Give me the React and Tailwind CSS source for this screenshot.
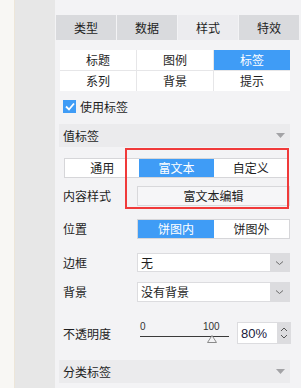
import React from "react";

const tabs = ["类型", "数据", "样式", "特效"];
const subTabs = ["标题", "图例", "标签", "系列", "背景", "提示"];

function Chevron() {
  return (
    <svg width="9" height="6" viewBox="0 0 9 6">
      <path d="M1 1.5 L4.5 4.5 L8 1.5" fill="none" stroke="#6b6b6b" strokeWidth="1" />
    </svg>
  );
}

function SectionHeader({ title }) {
  return (
    <div className="ml-[4px] w-[231px] h-[23px] bg-[#ebebed] flex items-center justify-between pl-[4px] pr-[5px]">
      <span>{title}</span>
      <svg width="9" height="5" viewBox="0 0 9 5">
        <path d="M0 0 L9 0 L4.5 5 Z" fill="#a3a3a6" />
      </svg>
    </div>
  );
}

function Select({ value }) {
  return (
    <div className="w-[153px] h-full flex border border-[#dcdcdf] bg-white">
      <div className="flex-1 flex items-center pl-[3px]">{value}</div>
      <div className="w-[19px] bg-[#dcdcdf] flex items-center justify-center">
        <Chevron />
      </div>
    </div>
  );
}

export default function App() {
  return (
    <div className="flex w-[301px] h-[388px] overflow-hidden text-[12px] text-[#1e1e1e] font-['Noto_Sans_CJK_SC',sans-serif] leading-none">
      {/* left strips */}
      <div className="w-[15px] bg-[#f8f7f4] border-r border-[#ede6d9]" />
      <div className="w-[40px] bg-[#e7e7e7]" />

      {/* settings panel */}
      <div className="relative flex-1 bg-[#f3f3f5] flex flex-col">
        {/* main tabs */}
        <div className="mt-[15px] ml-[1px] flex gap-[1px] h-[25px]">
          {tabs.map((t) => (
            <div
              key={t}
              className={
                "w-[60px] flex items-center justify-center " +
                (t === "样式" ? "bg-[#ececef]" : "bg-[#d9dadd]")
              }
            >
              {t}
            </div>
          ))}
        </div>

        {/* sub tabs */}
        <div className="mt-[10px] ml-[5px] w-[230px] grid grid-cols-3 gap-[1px] bg-[#e6e6e8]">
          {subTabs.map((t) => (
            <div
              key={t}
              className={
                "h-[20px] flex items-center justify-center " +
                (t === "标签" ? "bg-[#3f9cf6] text-white" : "bg-white")
              }
            >
              {t}
            </div>
          ))}
        </div>

        {/* use label checkbox */}
        <div className="mt-[9px] ml-[8px] h-[13px] flex items-center gap-[4px]">
          <div className="w-[13px] h-[13px] bg-[#3f9cf6] flex items-center justify-center">
            <svg width="10" height="9" viewBox="0 0 10 9">
              <path d="M1 4.5 L4 7.5 L9 1.5" fill="none" stroke="white" strokeWidth="1.8" />
            </svg>
          </div>
          <span>使用标签</span>
        </div>

        <div className="mt-[11px]">
          <SectionHeader title="值标签" />
        </div>

        {/* label type segmented */}
        <div className="mt-[11px] ml-[9px] h-[20px] flex w-[225px] border border-[#d6d6d9]">
          <div className="flex-1 bg-white flex items-center justify-center">通用</div>
          <div className="flex-1 bg-[#3f9cf6] text-white flex items-center justify-center">富文本</div>
          <div className="flex-1 bg-white flex items-center justify-center">自定义</div>
        </div>

        {/* content style */}
        <div className="mt-[8px] ml-[8px] h-[20px] flex items-center">
          <div className="w-[74px]">内容样式</div>
          <div className="w-[153px] h-full border border-[#d8d8db] bg-[#f6f6f8] flex items-center justify-center">
            富文本编辑
          </div>
        </div>

        {/* position */}
        <div className="mt-[13px] ml-[8px] h-[20px] flex items-center">
          <div className="w-[74px]">位置</div>
          <div className="w-[153px] h-full flex border border-[#d6d6d9]">
            <div className="w-[76px] bg-[#3f9cf6] text-white flex items-center justify-center">饼图内</div>
            <div className="flex-1 bg-white flex items-center justify-center">饼图外</div>
          </div>
        </div>

        {/* border */}
        <div className="mt-[14px] ml-[8px] h-[19px] flex items-center">
          <div className="w-[74px]">边框</div>
          <Select value="无" />
        </div>

        {/* background */}
        <div className="mt-[10px] ml-[8px] h-[20px] flex items-center">
          <div className="w-[74px]">背景</div>
          <Select value="没有背景" />
        </div>

        {/* opacity */}
        <div className="mt-[20px] ml-[8px] h-[22px] flex items-center">
          <div className="w-[77px] pt-[2px]">不透明度</div>
          <div className="relative w-[89px] h-full">
            <span className="absolute left-0 top-[0px] text-[10px] font-['Liberation_Sans',sans-serif] text-[#333]">0</span>
            <span className="absolute left-[63px] top-[0px] text-[10px] font-['Liberation_Sans',sans-serif] text-[#333]">100</span>
            <div className="absolute left-0 right-0 top-[14px] h-[1px] bg-[#3a3a3a]" />
            <svg className="absolute left-[67px] top-[13px]" width="10" height="8" viewBox="0 0 10 8">
              <path d="M5 0.5 L9.5 7.5 L0.5 7.5 Z" fill="#f3f3f5" stroke="#8a8a8a" strokeWidth="1" />
            </svg>
          </div>
          <div className="ml-[8px] w-[54px] h-full flex border border-[#dcdcdf]">
            <div className="flex-1 bg-white flex items-center pl-[3px] text-[13px] text-[#1a1a3c] font-['Liberation_Sans',sans-serif]">
              80%
            </div>
            <div className="w-[13px] bg-[#dcdcdf] flex flex-col items-center justify-center gap-[2px]">
              <svg width="8" height="5" viewBox="0 0 8 5">
                <path d="M1 4 L4 1 L7 4" fill="none" stroke="#555" strokeWidth="1" />
              </svg>
              <svg width="8" height="5" viewBox="0 0 8 5">
                <path d="M1 1 L4 4 L7 1" fill="none" stroke="#555" strokeWidth="1" />
              </svg>
            </div>
          </div>
        </div>

        <div className="mt-[16px]">
          <SectionHeader title="分类标签" />
        </div>

        {/* highlight annotation */}
        <div className="absolute left-[70px] top-[148px] w-[164px] h-[61px] border-2 border-[#f03a3a] pointer-events-none" />
      </div>
    </div>
  );
}
